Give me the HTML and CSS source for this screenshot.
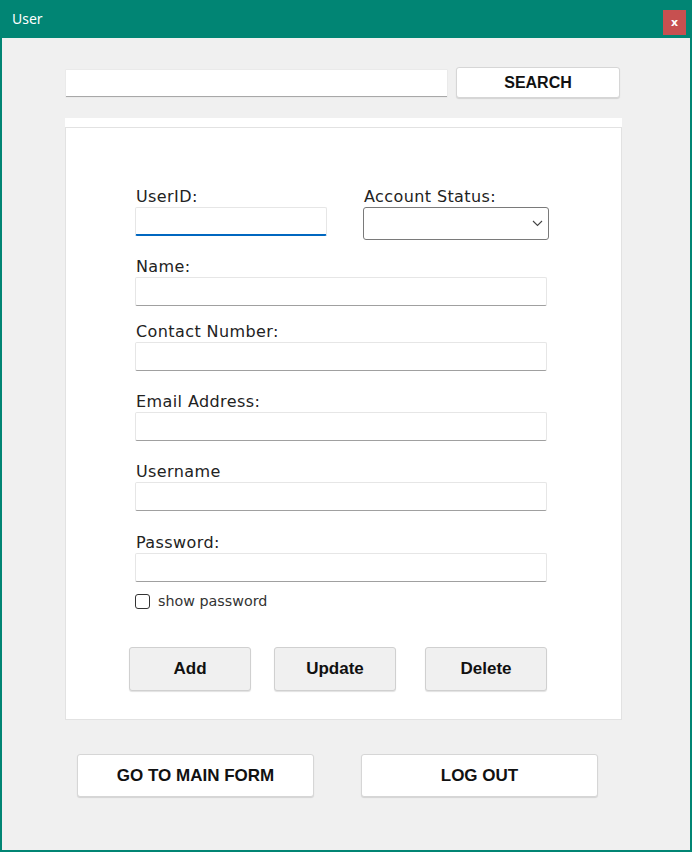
FILE: index.html
```html
<!DOCTYPE html>
<html>
<head>
<meta charset="utf-8">
<link rel="stylesheet" href="styles.css">
</head>
<body>
<div class="window">
  <div class="titlebar">
    <span class="title">User</span>
    <span class="close">x</span>
  </div>
  <div class="content">
    <div class="search-row">
      <div class="search-input"></div>
      <div class="btn search-btn">SEARCH</div>
    </div>
    <div class="strip"></div>
    <div class="panel">
      <div class="row1">
        <div class="col-left">
          <div class="label">UserID:</div>
          <div class="input focused"></div>
        </div>
        <div class="col-right">
          <div class="label">Account Status:</div>
          <div class="select">
            <svg class="chev" width="11" height="7" viewBox="0 0 11 7"><path d="M1 1 L5.5 5.5 L10 1" fill="none" stroke="#444" stroke-width="1.1"/></svg>
          </div>
        </div>
      </div>
      <div class="group g-name">
        <div class="label">Name:</div>
        <div class="input"></div>
      </div>
      <div class="group g-contact">
        <div class="label">Contact Number:</div>
        <div class="input"></div>
      </div>
      <div class="group">
        <div class="label">Email Address:</div>
        <div class="input"></div>
      </div>
      <div class="group">
        <div class="label">Username</div>
        <div class="input"></div>
      </div>
      <div class="group g-pass">
        <div class="label">Password:</div>
        <div class="input"></div>
      </div>
      <div class="check-row">
        <span class="checkbox"></span>
        <span class="check-label">show password</span>
      </div>
      <div class="actions">
        <div class="btn gray">Add</div>
        <div class="btn gray b-update">Update</div>
        <div class="btn gray b-delete">Delete</div>
      </div>
    </div>
    <div class="bottom-row">
      <div class="btn big">GO TO MAIN FORM</div>
      <div class="btn big">LOG OUT</div>
    </div>
  </div>
</div>
</body>
</html>
```

FILE: styles.css
```css
html, body {
  margin: 0;
  padding: 0;
  background: #f0f0f0;
}
.window {
  width: 692px;
  height: 852px;
  box-sizing: border-box;
  border-left: 2px solid #018574;
  border-right: 2px solid #018574;
  border-bottom: 2px solid #018574;
  background: #f0f0f0;
  display: flex;
  flex-direction: column;
}
.titlebar {
  height: 38px;
  background: #018574;
  display: flex;
  align-items: flex-start;
  justify-content: space-between;
  flex-shrink: 0;
}
.title {
  font-family: "Noto Sans", sans-serif;
  font-size: 14px;
  color: #fff;
  margin-left: 10px;
  margin-top: 9px;
}
.close {
  width: 23px;
  height: 25px;
  margin-top: 10px;
  margin-right: 4px;
  background: #c75050;
  color: #fff;
  font-family: "DejaVu Sans", sans-serif;
  font-size: 11px;
  font-weight: bold;
  display: flex;
  align-items: center;
  justify-content: center;
}
.content {
  display: flex;
  flex-direction: column;
  padding-left: 63px;
}
.search-row {
  display: flex;
  align-items: flex-start;
  margin-top: 29px;
  margin-left: 1px;
}
.search-input {
  width: 381px;
  height: 26px;
  margin-top: 3px;
  background: #fff;
  border-bottom: 1.5px solid #a8a8a8;
  box-shadow: 0 0 0 0.5px #e4e4e4;
}
.btn {
  box-sizing: border-box;
  display: flex;
  align-items: center;
  justify-content: center;
  font-family: "Liberation Sans", Arial, sans-serif;
  font-weight: bold;
  color: #111;
  background: #fff;
  border: 1px solid #d6d6d6;
  border-radius: 3px;
  box-shadow: 0 1px 1px rgba(0,0,0,0.12);
}
.search-btn {
  width: 164px;
  height: 31px;
  margin-left: 9px;
  font-size: 16px;
}
.strip {
  width: 557px;
  height: 9px;
  margin-top: 20px;
  background: #fff;
}
.panel {
  width: 557px;
  box-sizing: border-box;
  height: 593px;
  background: #fff;
  border: 1px solid #e2e2e2;
  padding-left: 69px;
  padding-top: 56px;
  display: flex;
  flex-direction: column;
}
.label {
  font-family: "DejaVu Sans", sans-serif;
  font-size: 16px;
  letter-spacing: 0.4px;
  line-height: 20px;
  height: 20px;
  padding-top: 3px;
  color: #222;
  margin-left: 1px;
}
.row1 {
  display: flex;
  align-items: flex-start;
}
.col-left {
  width: 192px;
}
.col-right {
  margin-left: 36px;
  width: 186px;
}
.input {
  box-sizing: border-box;
  width: 412px;
  height: 29px;
  background: #fff;
  border: 1px solid #e6e6e6;
  border-bottom: 1.5px solid #a0a0a0;
  border-radius: 2px;
}
.input.focused {
  width: 192px;
  border-bottom: 2px solid #0067c0;
}
.select {
  box-sizing: border-box;
  width: 186px;
  height: 33px;
  border: 1px solid #7a7a7a;
  border-radius: 3px;
  background: #fff;
  display: flex;
  align-items: center;
  justify-content: flex-end;
  padding-right: 5px;
}
.group {
  margin-top: 18px;
}
.g-name { margin-top: 14px; }
.g-contact { margin-top: 13px; }
.g-pass { margin-top: 19px; }
.check-row {
  display: flex;
  align-items: center;
  margin-top: 11px;
  height: 16px;
}
.checkbox {
  box-sizing: border-box;
  width: 15px;
  height: 15px;
  border: 1px solid #333;
  border-radius: 3px;
  background: #fff;
}
.check-label {
  font-family: "DejaVu Sans", sans-serif;
  font-size: 14.3px;
  color: #333;
  margin-left: 8px;
}
.actions {
  display: flex;
  margin-left: -6px;
  margin-top: 38px;
}
.b-update { margin-left: 23px; }
.b-delete { margin-left: 29px; }
.btn.gray {
  width: 122px;
  height: 44px;
  background: #f0f0f0;
  border-color: #d0d0d0;
  font-size: 17px;
}
.bottom-row {
  display: flex;
  margin-left: 12px;
  margin-top: 34px;
  gap: 47px;
}
.btn.big {
  width: 237px;
  height: 43px;
  font-size: 17px;
}
```
